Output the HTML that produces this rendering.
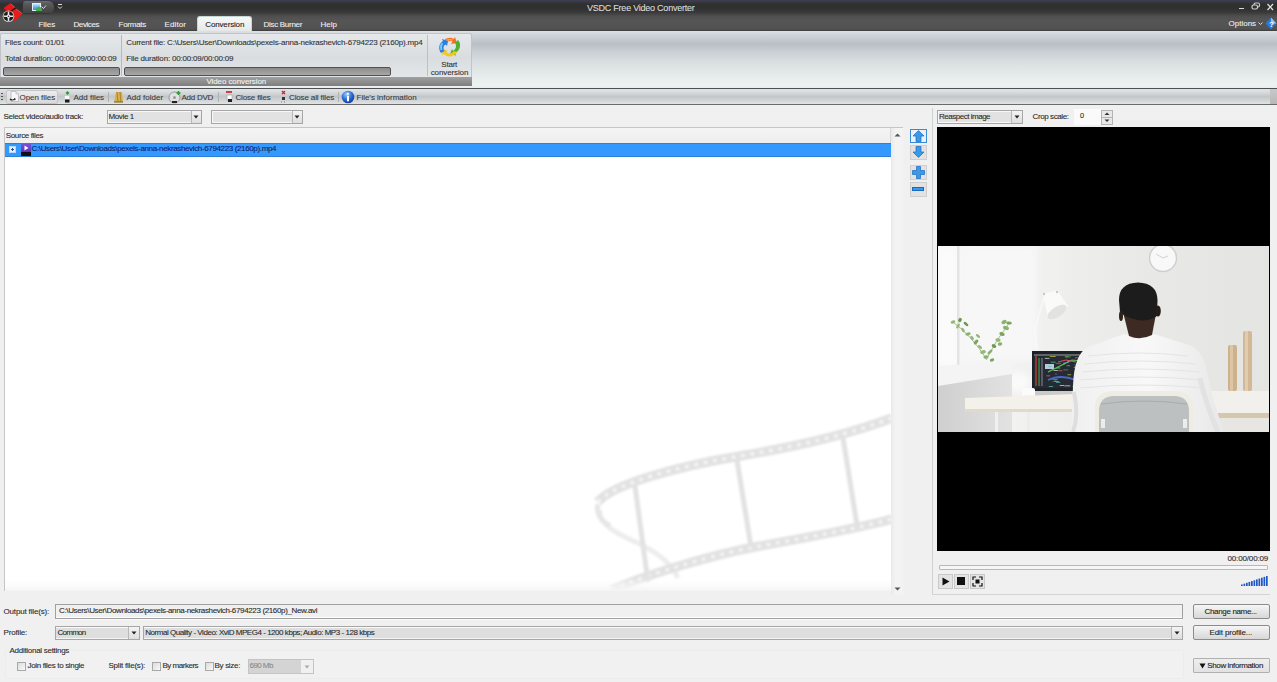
<!DOCTYPE html>
<html><head><meta charset="utf-8">
<style>
*{margin:0;padding:0;box-sizing:border-box}
html,body{width:1277px;height:682px;overflow:hidden;background:#f0f0f0;font-family:"Liberation Sans",sans-serif;font-size:8px;color:#222}
.a{position:absolute}
.t{position:absolute;white-space:nowrap;line-height:10px;-webkit-text-stroke:0.1px currentColor}
</style></head><body>
<!-- title bar -->
<div class="a" style="left:0;top:0;width:1277px;height:31px;background:linear-gradient(#3e3e4e 0px,#383846 2px,#2e302e 4px,#303030 8px,#383838 12px,#4e4e4e 16px,#555555 20px,#525252 29px,#3c3c3c 31px)"></div>
<div class="t" style="left:587.0px;top:2px;color:#dcdcdc;font-size:9px;line-height:12px;letter-spacing:-0.235px">VSDC Free Video Converter</div>
<svg class="a" style="left:0;top:0" width="30" height="28" viewBox="0 0 30 28">
 <path d="M3.5 8 L10.5 3 L15.5 8 L8.5 13 Z" fill="#e41818"/>
 <path d="M15.5 8.5 L22.5 13.5 L15 21.5 L9 13.5 Z" fill="#ea1a1a"/>
 <path d="M8.5 13 L15.5 8" stroke="#2a0606" stroke-width="1.3"/>
 <path d="M11 4 L15 7.5 M16 9 L21.5 13" stroke="#ff9090" stroke-width="0.6" opacity="0.7"/>
 <circle cx="8.5" cy="16.3" r="5.8" fill="#d0d0d0"/>
 <circle cx="8.5" cy="16.3" r="5" fill="#1a1a1a"/>
 <path d="M8.5 11.5 V21 M3.7 16.3 H13.3" stroke="#e8e8e8" stroke-width="1.6"/>
 <circle cx="8.5" cy="16.3" r="1.8" fill="#f0f0f0"/>
 <circle cx="8.5" cy="16.3" r="0.8" fill="#222"/>
</svg>
<div class="a" style="left:23px;top:1px;width:31px;height:13px;border-radius:3px 6px 6px 3px;background:linear-gradient(#6e6e6e,#5a5a5a 20%,#4c4c4c 60%,#444 90%,#2a2a2a)"></div>
<div class="a" style="left:32px;top:3px;width:9px;height:8px;background:linear-gradient(#c8e4ff,#6ab0e8 50%,#3a90c8);border:1px solid #e0f0ff"></div><div class="a" style="left:36px;top:7px;width:6px;height:4px;border-radius:3px 3px 0 0;background:#40b040"></div>
<svg class="a" style="left:41px;top:5px" width="6" height="5"><path d="M0.5 1.5 L2.5 3.5 L5 0.5" stroke="#ddd" stroke-width="1" fill="none"/></svg>
<svg class="a" style="left:57px;top:3px" width="6" height="8"><path d="M1 1.5 H5" stroke="#ddd" stroke-width="1"/><path d="M1 3.5 L3 5.5 L5 3.5" stroke="#ddd" stroke-width="1" fill="none"/></svg>
<!-- window controls -->
<div class="a" style="left:1239px;top:8px;width:5px;height:1.2px;background:#d8d8d8"></div>
<svg class="a" style="left:1251px;top:2px" width="10" height="8" viewBox="0 0 10 8"><rect x="3" y="1" width="5.5" height="4" rx="1.5" fill="none" stroke="#c8c8c8" stroke-width="1.2"/><rect x="1" y="3" width="5.5" height="4" rx="1.5" fill="#333" stroke="#d0d0d0" stroke-width="1.2"/></svg>
<svg class="a" style="left:1266px;top:3px" width="9" height="8"><path d="M1.5 1 L7 7 M7 1 L1.5 7" stroke="#e0e0e0" stroke-width="1.3"/></svg>
<!-- tabs -->
<div class="t" style="left:38.5px;top:20px;color:#eeeeee;font-size:8px;letter-spacing:-0.058px">Files</div>
<div class="t" style="left:73.5px;top:20px;color:#eeeeee;font-size:8px;letter-spacing:-0.408px">Devices</div>
<div class="t" style="left:118.5px;top:20px;color:#eeeeee;font-size:8px;letter-spacing:-0.248px">Formats</div>
<div class="t" style="left:164.5px;top:20px;color:#eeeeee;font-size:8px;letter-spacing:0.117px">Editor</div>
<div class="a" style="left:197px;top:16px;width:55px;height:16px;border-radius:3px 3px 0 0;background:linear-gradient(#f8f9f9,#e4e7e8);border:1px solid #c6d8d6;border-bottom:none"></div>
<div class="t" style="left:205.3px;top:20px;color:#222;font-size:8px;letter-spacing:-0.156px">Conversion</div>
<div class="t" style="left:263.5px;top:20px;color:#eeeeee;font-size:8px;letter-spacing:-0.290px">Disc Burner</div>
<div class="t" style="left:320.5px;top:20px;color:#eeeeee;font-size:8px;letter-spacing:0.037px">Help</div>
<div class="t" style="left:1228.5px;top:19px;color:#eeeeee;font-size:8px;letter-spacing:0.004px">Options</div>
<svg class="a" style="left:1258px;top:22px" width="5" height="3"><path d="M0.5 0.5 L2.5 2.5 L4.5 0.5" stroke="#ddd" fill="none"/></svg>
<svg class="a" style="left:1265px;top:17px" width="12" height="13" viewBox="0 0 12 13"><path d="M6 0.5 L11.5 6.5 L6 12.5 L0.5 6.5 Z" fill="#2a78d8"/><path d="M6 0.5 L11.5 6.5 L6 6.5 Z" fill="#8cc4f4"/><text x="4" y="10" font-size="8" fill="#fff" font-family="Liberation Sans" font-weight="bold">?</text></svg>

<!-- ribbon panel -->
<div class="a" style="left:0;top:31px;width:1277px;height:58px;background:linear-gradient(#dde1e6 0px,#cfd4da 4px,#babfc7 13px,#c9ced4 20px,#d8dde0 30px,#e6ebeb 45px,#eef2f2 54px,#e8ecec 58px)"></div>
<!-- group -->
<div class="a" style="left:0;top:33px;width:472px;height:53px;background:linear-gradient(#e6e8ea,#dadde0 45%,#e8ebec);border:1px solid #c0c4c8;border-radius:2px"></div>
<div class="a" style="left:121px;top:35px;width:1px;height:41px;background:#b8b8b8"></div>
<div class="a" style="left:427px;top:35px;width:1px;height:41px;background:#c0c0c0"></div>
<div class="t" style="left:5.1px;top:38px;color:#333;font-size:8px;letter-spacing:-0.203px">Files count: 01/01</div>
<div class="t" style="left:5.0px;top:54px;color:#333;font-size:8px;letter-spacing:-0.163px">Total duration: 00:00:09/00:00:09</div>
<div class="t" style="left:126.3px;top:38px;color:#333;font-size:8px;letter-spacing:-0.199px">Current file: C:\Users\User\Downloads\pexels-anna-nekrashevich-6794223 (2160p).mp4</div>
<div class="t" style="left:126.3px;top:54px;color:#333;font-size:8px;letter-spacing:-0.187px">File duration: 00:00:09/00:00:09</div>
<div class="a" style="left:3px;top:67px;width:117px;height:9px;background:linear-gradient(#8c8c8c,#a8a8a8);border:1px solid #505050;border-radius:2px"></div>
<div class="a" style="left:124px;top:67px;width:267px;height:9px;background:linear-gradient(#8c8c8c,#a8a8a8);border:1px solid #505050;border-radius:2px"></div>
<div class="a" style="left:0;top:77px;width:472px;height:9px;background:linear-gradient(#a0a0a0,#7e7e7e)"></div>
<div class="t" style="left:206.5px;top:76px;color:#f4f4f4;font-size:8px;line-height:11px;letter-spacing:-0.102px">Video conversion</div>
<!-- start conversion -->
<svg class="a" style="left:438px;top:36px" width="24" height="23" viewBox="0 0 24 23">
 <path d="M4 9 C5 3 11 0 16 3 L17 1 L19 7 L13 8 L14.5 5.5 C11 4 8 6 8 9 Z" fill="#f07020"/>
 <path d="M6 6 C8 3 12 2 15 3.5 L14 5 C11 4 9 5 7.5 7 Z" fill="#ffa050"/>
 <path d="M20 4 C24 8 22 15 17 17 L18 19.5 L12 18 L14 13 L15 15 C18 13 19 10 17 7 Z" fill="#50b030"/>
 <path d="M19 16 C16 21 9 22 6 18 L4 19 L5 13 L10 15 L8 16 C10 18 14 18 16 15 Z" fill="#f4c818"/>
 <path d="M3 17 C0 13 1 7 5 5 L4 3 L10 5 L9 10 L7.5 8 C5 10 5 13 6.5 15 Z" fill="#2a80e0"/>
 <path d="M2.5 14 C1.5 11 2 8 4 6.5 L5 8 C4 9.5 3.5 11.5 4.5 14 Z" fill="#80c4ff"/>
</svg>
<div class="t" style="left:441.3px;top:61px;color:#333;font-size:8px;line-height:8px;letter-spacing:-0.219px">Start</div>
<div class="t" style="left:430.7px;top:69px;color:#333;font-size:8px;line-height:8px;letter-spacing:-0.109px">conversion</div>

<!-- toolbar -->
<div class="a" style="left:0;top:88px;width:1277px;height:17px;background:linear-gradient(#e2e5e7,#d2d6d9 30%,#c2c6c9 50%,#d0d4d6 75%,#e2e4e4);border-top:1px solid #4c5052;border-bottom:1px solid #6a6a6a"></div>
<div class="a" style="left:1px;top:93px;width:2px;height:8px;background:repeating-linear-gradient(#555 0 1px,transparent 1px 3px)"></div>
<div class="a" style="left:6px;top:90px;width:52px;height:14px;border:1px solid #c6c6c6;border-radius:2px;background:linear-gradient(#ececec,#d9d9d9)"></div>
<svg class="a" style="left:8px;top:90px" width="13" height="13" viewBox="0 0 13 13"><path d="M3 1.5 H8 L10.5 4 V11.5 H3 Z" fill="#f6f6f6" stroke="#b0b0b0" stroke-width="0.7"/><path d="M8 1.5 V4 H10.5" fill="#ddd" stroke="#b0b0b0" stroke-width="0.5"/><path d="M2 9 Q4 11 7 9" stroke="#222" stroke-width="1.1" fill="none"/><path d="M6 8 L8 9 L6.5 10.5" fill="#222"/></svg>
<div class="t" style="left:19.5px;top:93px;color:#3a3a3a;font-size:8px;letter-spacing:-0.042px">Open files</div>
<svg class="a" style="left:62px;top:90px" width="10" height="14" viewBox="0 0 10 14"><path d="M5.5 1 L7.5 3 L5.5 5 L3.5 3 Z" fill="#28a028"/><rect x="2.5" y="5.5" width="5" height="4" fill="#fafafa" stroke="#bbb" stroke-width="0.5"/><rect x="3" y="9.5" width="4.5" height="3" fill="#1a1a1a"/></svg>
<div class="t" style="left:73.5px;top:93px;color:#3a3a3a;font-size:8px;letter-spacing:-0.009px">Add files</div>
<div class="a" style="left:108px;top:92px;width:1px;height:10px;background:#b0b0b0"></div>
<svg class="a" style="left:113px;top:90px" width="11" height="14" viewBox="0 0 11 14"><path d="M1 12 L3 2 L9 2 L10 12 Z" fill="#d8b050"/><path d="M4 2 L5 12 M7 2 L8 12" stroke="#a07818" stroke-width="0.8"/><path d="M1 12 H10" stroke="#806010"/></svg>
<div class="t" style="left:126.5px;top:93px;color:#3a3a3a;font-size:8px;letter-spacing:0.013px">Add folder</div>
<svg class="a" style="left:168px;top:90px" width="14" height="14" viewBox="0 0 14 14"><circle cx="6.5" cy="7.5" r="5.5" fill="#e0e0e0" stroke="#888" stroke-width="0.8"/><circle cx="6.5" cy="7.5" r="1.5" fill="#999"/><path d="M10.5 1 V5 M8.5 3 H12.5" stroke="#20a020" stroke-width="1.5"/><rect x="4" y="11" width="5" height="2" fill="#222"/></svg>
<div class="t" style="left:181.5px;top:93px;color:#3a3a3a;font-size:8px;letter-spacing:-0.250px">Add DVD</div>
<div class="a" style="left:218px;top:92px;width:1px;height:10px;background:#b0b0b0"></div>
<svg class="a" style="left:225px;top:90px" width="10" height="14" viewBox="0 0 10 14"><rect x="1" y="1" width="6" height="2" fill="#d04040"/><rect x="2" y="5" width="5" height="5" fill="#fff" stroke="#999" stroke-width="0.6"/><rect x="3" y="9" width="4" height="3" fill="#222"/></svg>
<div class="t" style="left:235.5px;top:93px;color:#3a3a3a;font-size:8px;letter-spacing:-0.164px">Close files</div>
<svg class="a" style="left:279px;top:90px" width="10" height="14" viewBox="0 0 10 14"><path d="M3 1 L6 4 M6 1 L3 4" stroke="#d02020" stroke-width="1.2"/><rect x="3" y="7" width="3" height="3" fill="#333"/><path d="M2 12 h1 M5 12 h1" stroke="#777"/></svg>
<div class="t" style="left:289.0px;top:93px;color:#3a3a3a;font-size:8px;letter-spacing:-0.135px">Close all files</div>
<div class="a" style="left:338px;top:92px;width:1px;height:10px;background:#b0b0b0"></div>
<svg class="a" style="left:341px;top:90px" width="14" height="14" viewBox="0 0 14 14"><defs><radialGradient id="ig" cx="0.4" cy="0.3" r="0.7"><stop offset="0" stop-color="#9cd0ff"/><stop offset="0.6" stop-color="#2a6ad8"/><stop offset="1" stop-color="#1a3aa0"/></radialGradient></defs><circle cx="7" cy="7" r="6.3" fill="url(#ig)"/><circle cx="7" cy="3.8" r="1.1" fill="#fff"/><rect x="6" y="5.8" width="2" height="5.5" fill="#fff"/></svg>
<div class="t" style="left:356.5px;top:93px;color:#3a3a3a;font-size:8px;letter-spacing:-0.006px">File's information</div>
<div class="a" style="left:1270px;top:89px;width:7px;height:15px;background:linear-gradient(#c8c8c8,#b8b8b8)"></div>

<!-- main list -->
<div class="t" style="left:3.5px;top:112px;color:#2a2a2a;font-size:8px;letter-spacing:-0.302px">Select video/audio track:</div>
<div class="a" style="left:107px;top:110px;width:95px;height:14px;background:#e2e2e2;border:1px solid #a6a6a6;box-shadow:inset 0 0 0 1px #f8f8f8"></div>
<div class="a" style="left:191px;top:111px;width:10px;height:12px;background:linear-gradient(#f4f4f4,#dedede);border-left:1px solid #b8b8b8"></div>
<svg class="a" style="left:193px;top:115px" width="6" height="4"><path d="M0.5 0.5 H5.5 L3 3.5 Z" fill="#222"/></svg>
<div class="t" style="left:108.5px;top:112px;color:#2a2a2a;font-size:8px;letter-spacing:-0.373px">Movie 1</div>
<div class="a" style="left:211px;top:110px;width:92px;height:14px;background:#e2e2e2;border:1px solid #a6a6a6;box-shadow:inset 0 0 0 1px #f8f8f8"></div>
<div class="a" style="left:292px;top:111px;width:10px;height:12px;background:linear-gradient(#f4f4f4,#dedede);border-left:1px solid #b8b8b8"></div>
<svg class="a" style="left:294px;top:115px" width="6" height="4"><path d="M0.5 0.5 H5.5 L3 3.5 Z" fill="#222"/></svg>

<div class="a" style="left:4px;top:127px;width:899px;height:464px;background:#fff;border-top:1px solid #c6c6c6;border-left:1px solid #c6c6c6"></div>
<div class="a" style="left:5px;top:128px;width:886px;height:15px;background:linear-gradient(#f4f4f4,#eeeeee);border-right:1px solid #d8d8d8"></div>
<div class="t" style="left:5.8px;top:131px;color:#2a2a2a;font-size:8px;letter-spacing:-0.375px">Source files</div>
<svg class="a" style="left:5px;top:143px" width="886" height="448" viewBox="5 143 886 448">
 <defs><filter id="fb" filterUnits="userSpaceOnUse" x="560" y="380" width="340" height="220"><feGaussianBlur stdDeviation="0.9"/></filter>
 <linearGradient id="fade" x1="0" y1="0" x2="0" y2="1"><stop offset="0" stop-color="#fff" stop-opacity="0"/><stop offset="1" stop-color="#f4f4f4" stop-opacity="1"/></linearGradient></defs>
 <g fill="none" stroke-linecap="butt" filter="url(#fb)">
  <path d="M600 510 C598 522 612 532 640 544 C660 554 672 564 678 578" stroke="#ededed" stroke-width="5"/>
  <path d="M598 502 C612 484 680 466 740 456 C800 446 850 434 892 418" stroke="#e2e2e2" stroke-width="9.5"/>
  <path d="M598 502 C612 484 680 466 740 456 C800 446 850 434 892 418" stroke="#f6f6f6" stroke-width="3.2" stroke-dasharray="3.5 6"/>
  <path d="M612 590 C650 573 720 553 760 546 C810 537 860 528 892 519" stroke="#e2e2e2" stroke-width="9.5"/>
  <path d="M612 590 C650 573 720 553 760 546 C810 537 860 528 892 519" stroke="#f6f6f6" stroke-width="3.2" stroke-dasharray="3.5 6"/>
  <path d="M635 486 L648 582" stroke="#e2e2e2" stroke-width="5"/>
  <path d="M737 460 L751 547" stroke="#e2e2e2" stroke-width="5"/>
  <path d="M843 438 L857 525" stroke="#e2e2e2" stroke-width="5"/>
  <path d="M598 504 C596 514 600 520 610 526" stroke="#e6e6e6" stroke-width="5"/>
 </g>
 <rect x="5" y="578" width="886" height="13" fill="url(#fade)"/>
</svg>
<div class="a" style="left:891px;top:128px;width:15px;height:467px;background:linear-gradient(90deg,#eaeaea,#f3f3f3 30%,#f3f3f3 70%,#efefef)"></div>
<svg class="a" style="left:894px;top:133px" width="7" height="4"><path d="M0.5 3.5 L3.5 0.5 L6.5 3.5 Z" fill="#555"/></svg>
<svg class="a" style="left:894px;top:587px" width="7" height="4"><path d="M0.5 0.5 L3.5 3.5 L6.5 0.5 Z" fill="#555"/></svg>
<div class="a" style="left:5px;top:143px;width:886px;height:14px;background:#3399ff;border-top:1px solid #2f80d8;border-bottom:1px solid #2f80d8"></div>
<div class="a" style="left:9px;top:146px;width:7px;height:7px;background:#e8f2ff;border:1px solid #bcd8f8"></div>
<div class="a" style="left:11px;top:149px;width:3px;height:1px;background:#2050a0"></div>
<div class="a" style="left:12px;top:148px;width:1px;height:3px;background:#2050a0"></div>
<div class="a" style="left:21px;top:144px;width:10px;height:9px;background:linear-gradient(#7a50d8,#5a30b8);border-radius:1px"></div>
<svg class="a" style="left:24px;top:145px" width="5" height="6"><path d="M0.5 0.5 L4.5 3 L0.5 5.5 Z" fill="#fff"/></svg>
<div class="a" style="left:21px;top:152px;width:10px;height:4px;background:#111"></div>
<div class="t" style="left:31.5px;top:144px;color:#12206a;font-size:8px;letter-spacing:-0.359px">C:\Users\User\Downloads\pexels-anna-nekrashevich-6794223 (2160p).mp4</div>

<!-- side buttons -->
<div class="a" style="left:910px;top:129px;width:17px;height:14px;background:#e8f0f8;border:1px solid #3a8ad8"></div>
<svg class="a" style="left:912px;top:130px" width="13" height="12" viewBox="0 0 13 12"><path d="M6.5 0.5 L12 6 L9 6 L9 11.5 L4 11.5 L4 6 L1 6 Z" fill="#3a9ae8" stroke="#1a6ac0" stroke-width="0.7"/></svg>
<div class="a" style="left:910px;top:145px;width:17px;height:15px;background:#e2e2e2;border:1px solid #cfcfcf"></div>
<svg class="a" style="left:912px;top:146px" width="13" height="12" viewBox="0 0 13 12"><path d="M6.5 11.5 L12 6 L9 6 L9 0.5 L4 0.5 L4 6 L1 6 Z" fill="#3a9ae8" stroke="#1a6ac0" stroke-width="0.7"/></svg>
<div class="a" style="left:910px;top:165px;width:17px;height:15px;background:#e2e2e2;border:1px solid #cfcfcf"></div>
<svg class="a" style="left:912px;top:166px" width="13" height="13" viewBox="0 0 13 13"><path d="M4.5 0.5 H8.5 V4.5 H12.5 V8.5 H8.5 V12.5 H4.5 V8.5 H0.5 V4.5 H4.5 Z" fill="#3a9ae8" stroke="#1a6ac0" stroke-width="0.7"/></svg>
<div class="a" style="left:910px;top:182px;width:17px;height:15px;background:#e2e2e2;border:1px solid #cfcfcf"></div>
<div class="a" style="left:912px;top:187px;width:12px;height:4px;background:#3a9ae8;border:0.5px solid #1a6ac0"></div>
<div class="a" style="left:932px;top:108px;width:1px;height:487px;background:#d0d0d0"></div>

<!-- right preview -->
<div class="a" style="left:937px;top:110px;width:86px;height:14px;background:#e2e2e2;border:1px solid #a6a6a6;box-shadow:inset 0 0 0 1px #f8f8f8"></div>
<div class="a" style="left:1011px;top:111px;width:11px;height:12px;background:linear-gradient(#f4f4f4,#dedede);border-left:1px solid #b8b8b8"></div>
<svg class="a" style="left:1014px;top:115px" width="6" height="4"><path d="M0.5 0.5 H5.5 L3 3.5 Z" fill="#222"/></svg>
<div class="t" style="left:938.9px;top:112px;color:#2a2a2a;font-size:8px;letter-spacing:-0.472px">Reaspect image</div>
<div class="t" style="left:1032.5px;top:112px;color:#2a2a2a;font-size:8px;letter-spacing:-0.396px">Crop scale:</div>
<div class="a" style="left:1074px;top:109px;width:27px;height:16px;background:#fafafa"></div>
<div class="t" style="left:1080px;top:111px;color:#2a2a2a;font-size:7.3px">0</div>
<div class="a" style="left:1101px;top:110px;width:12px;height:15px;background:#e8e8e8;border:1px solid #b4b4b4"></div>
<div class="a" style="left:1102px;top:117px;width:10px;height:1px;background:#b4b4b4"></div>
<svg class="a" style="left:1104px;top:112px" width="6" height="4"><path d="M0.5 3 L3 0.5 L5.5 3 Z" fill="#333"/></svg>
<svg class="a" style="left:1104px;top:119px" width="6" height="4"><path d="M0.5 0.5 L3 3 L5.5 0.5 Z" fill="#333"/></svg>

<div class="a" style="left:937px;top:127px;width:333px;height:424px;background:#000"></div>
<svg class="a" style="left:938px;top:246px" width="331" height="186" viewBox="938 246 331 186">
 <defs>
  <filter id="bl" filterUnits="userSpaceOnUse" x="930" y="240" width="350" height="200"><feGaussianBlur stdDeviation="0.7"/></filter>
  <filter id="bl2" filterUnits="userSpaceOnUse" x="930" y="240" width="350" height="200"><feGaussianBlur stdDeviation="3"/></filter>
  <linearGradient id="wall" x1="0" x2="1"><stop offset="0" stop-color="#f6f6f6"/><stop offset="0.35" stop-color="#efefee"/><stop offset="0.6" stop-color="#e9e9e8"/><stop offset="1" stop-color="#e4e4e2"/></linearGradient>
  <linearGradient id="under" x1="0" x2="1"><stop offset="0" stop-color="#cfcfcf"/><stop offset="1" stop-color="#e2e2e2"/></linearGradient>
  <linearGradient id="shirt" x1="0" x2="1"><stop offset="0" stop-color="#f0f0f0"/><stop offset="0.5" stop-color="#f8f8f8"/><stop offset="1" stop-color="#e8e8e8"/></linearGradient>
 </defs>
 <rect x="938" y="246" width="331" height="186" fill="url(#wall)"/>
 <g filter="url(#bl2)">
  <rect x="938" y="246" width="20" height="120" fill="#fbfbfb"/>
  <rect x="962" y="246" width="75" height="115" fill="#f7f7f7"/>
  <rect x="1040" y="246" width="20" height="105" fill="#f0f0ef"/>
  <ellipse cx="1018" cy="382" rx="12" ry="10" fill="#fafafa"/>
 </g>
 <g filter="url(#bl)">
  <rect x="957" y="246" width="2.5" height="120" fill="#e4e4e4"/>
  <path d="M938 366 L1012 362 L1012 374 L938 386 Z" fill="#f4f4f4"/>
  <path d="M938 386 L1012 374 L1012 432 L938 432 Z" fill="url(#under)"/>
  <g stroke="#98b488" stroke-width="0.9" fill="none"><path d="M953 322 Q972 336 987 360"/><path d="M987 358 Q996 340 1010 322"/></g>
  <g><ellipse cx="953" cy="322" rx="2.4" ry="1.6" transform="rotate(-16 953 322)" fill="#94b878"/><ellipse cx="958" cy="326" rx="2.8" ry="1.3" transform="rotate(-58 958 326)" fill="#94b878"/><ellipse cx="963" cy="330" rx="2.5" ry="1.4" transform="rotate(59 963 330)" fill="#94b878"/><ellipse cx="968" cy="334" rx="2.7" ry="1.6" transform="rotate(-12 968 334)" fill="#8ab46c"/><ellipse cx="972" cy="338" rx="2.4" ry="1.4" transform="rotate(51 972 338)" fill="#94b878"/><ellipse cx="976" cy="342" rx="2.9" ry="1.7" transform="rotate(-52 976 342)" fill="#7ea460"/><ellipse cx="980" cy="347" rx="2.5" ry="1.3" transform="rotate(44 980 347)" fill="#94b878"/><ellipse cx="983" cy="352" rx="2.8" ry="1.9" transform="rotate(-13 983 352)" fill="#94b878"/><ellipse cx="986" cy="357" rx="2.6" ry="1.8" transform="rotate(-7 986 357)" fill="#8ab46c"/><ellipse cx="990" cy="352" rx="3.1" ry="1.4" transform="rotate(-44 990 352)" fill="#8ab46c"/><ellipse cx="994" cy="346" rx="2.5" ry="1.7" transform="rotate(33 994 346)" fill="#6e9852"/><ellipse cx="998" cy="340" rx="2.6" ry="1.8" transform="rotate(9 998 340)" fill="#94b878"/><ellipse cx="1002" cy="334" rx="2.8" ry="1.8" transform="rotate(22 1002 334)" fill="#7ea460"/><ellipse cx="1006" cy="328" rx="3.1" ry="1.9" transform="rotate(21 1006 328)" fill="#8ab46c"/><ellipse cx="1009" cy="323" rx="2.9" ry="1.5" transform="rotate(5 1009 323)" fill="#7ea460"/><ellipse cx="966" cy="324" rx="2.9" ry="1.4" transform="rotate(40 966 324)" fill="#6e9852"/><ellipse cx="978" cy="336" rx="2.5" ry="1.3" transform="rotate(42 978 336)" fill="#94b878"/><ellipse cx="1000" cy="344" rx="2.3" ry="1.8" transform="rotate(-11 1000 344)" fill="#8ab46c"/><ellipse cx="992" cy="360" rx="2.2" ry="1.6" transform="rotate(-10 992 360)" fill="#7ea460"/><ellipse cx="960" cy="320" rx="2.2" ry="1.7" transform="rotate(-55 960 320)" fill="#6e9852"/><ellipse cx="1004" cy="322" rx="2.8" ry="1.9" transform="rotate(-27 1004 322)" fill="#8ab46c"/></g>
  <path d="M1044 298 L1035 328 L1037 352" stroke="#f8f8f8" stroke-width="1.8" fill="none"/>
  <path d="M1043 294 L1057 290 L1068 306 L1048 319 Z" fill="#fafafa"/>
  <ellipse cx="1057" cy="312" rx="11" ry="5" transform="rotate(-33 1057 312)" fill="#e2e2e0"/>
  <circle cx="1044" cy="294" r="1.2" fill="#c8c8c8"/><circle cx="1057" cy="292" r="1.2" fill="#c8c8c8"/>
  <rect x="1032" y="351" width="54" height="42" fill="#1e2126"/>
  <rect x="1034" y="354" width="50" height="34" fill="#262b32"/>
  <path d="M1036 356 V386" stroke="#b83838" stroke-width="1.5"/>
  <path d="M1039 358 V386" stroke="#3a9a48" stroke-width="1.2"/>
  <path d="M1042 358 V386" stroke="#9aa8b0" stroke-width="0.8"/>
  <rect x="1045" y="364" width="9" height="5" fill="#c0c4d8"/>
  <rect x="1081.9" y="365.6" width="2.3" height="0.9" fill="#c0c040" opacity="0.8"/>
  <rect x="1064.4" y="385.4" width="5.9" height="0.9" fill="#e0e0e0" opacity="0.8"/>
  <rect x="1067.2" y="360.8" width="2.2" height="0.9" fill="#50c0c0" opacity="0.8"/>
  <rect x="1056.9" y="367.2" width="2.6" height="0.9" fill="#50c0c0" opacity="0.8"/>
  <rect x="1058.4" y="370.3" width="4.1" height="0.9" fill="#e06080" opacity="0.8"/>
  <rect x="1076.9" y="377.1" width="2.4" height="0.9" fill="#50c0c0" opacity="0.8"/>
  <rect x="1063.3" y="369.4" width="4.9" height="0.9" fill="#40b050" opacity="0.8"/>
  <rect x="1079.6" y="369.6" width="3.0" height="0.9" fill="#e0e0e0" opacity="0.8"/>
  <rect x="1064.8" y="356.4" width="3.7" height="0.9" fill="#c0c040" opacity="0.8"/>
  <rect x="1056.0" y="367.7" width="4.4" height="0.9" fill="#40b050" opacity="0.8"/>
  <rect x="1046.3" y="375.4" width="3.9" height="0.9" fill="#e06080" opacity="0.8"/>
  <rect x="1078.9" y="374.9" width="3.1" height="0.9" fill="#5070d0" opacity="0.8"/>
  <rect x="1044.8" y="357.9" width="4.7" height="0.9" fill="#e0e0e0" opacity="0.8"/>
  <rect x="1053.5" y="370.1" width="4.4" height="0.9" fill="#e0e0e0" opacity="0.8"/>
  <rect x="1050.7" y="361.7" width="5.0" height="0.9" fill="#50c0c0" opacity="0.8"/>
  <rect x="1066.6" y="365.3" width="3.5" height="0.9" fill="#50c0c0" opacity="0.8"/>
  <rect x="1074.9" y="386.1" width="4.7" height="0.9" fill="#40b050" opacity="0.8"/>
  <rect x="1055.8" y="362.9" width="5.2" height="0.9" fill="#40b050" opacity="0.8"/>
  <rect x="1056.5" y="377.0" width="4.6" height="0.9" fill="#d04050" opacity="0.8"/>
  <rect x="1047.9" y="366.0" width="3.3" height="0.9" fill="#50c0c0" opacity="0.8"/>
  <rect x="1052.5" y="381.1" width="5.8" height="0.9" fill="#d04050" opacity="0.8"/>
  <rect x="1056.8" y="376.2" width="5.5" height="0.9" fill="#5070d0" opacity="0.8"/>
  <rect x="1054.3" y="380.4" width="2.1" height="0.9" fill="#40b050" opacity="0.8"/>
  <rect x="1056.0" y="381.9" width="4.3" height="0.9" fill="#50c0c0" opacity="0.8"/>
  <rect x="1054.6" y="381.0" width="4.6" height="0.9" fill="#50c0c0" opacity="0.8"/>
  <rect x="1067.5" y="374.3" width="3.7" height="0.9" fill="#c0c040" opacity="0.8"/>
  <rect x="1074.2" y="364.4" width="3.4" height="0.9" fill="#5070d0" opacity="0.8"/>
  <rect x="1055.0" y="373.6" width="2.1" height="0.9" fill="#5070d0" opacity="0.8"/>
  <rect x="1049.9" y="356.1" width="5.8" height="0.9" fill="#c0c040" opacity="0.8"/>
  <rect x="1081.5" y="369.5" width="5.8" height="0.9" fill="#e06080" opacity="0.8"/>
  <rect x="1052.4" y="379.1" width="5.3" height="0.9" fill="#e06080" opacity="0.8"/>
  <rect x="1072.4" y="385.9" width="4.2" height="0.9" fill="#40b050" opacity="0.8"/>
  <rect x="1076.7" y="382.6" width="5.9" height="0.9" fill="#d04050" opacity="0.8"/>
  <rect x="1074.8" y="357.4" width="5.6" height="0.9" fill="#e06080" opacity="0.8"/>
  <rect x="1063.5" y="362.2" width="5.5" height="0.9" fill="#5070d0" opacity="0.8"/>
  <rect x="1065.9" y="356.4" width="5.0" height="0.9" fill="#40b050" opacity="0.8"/>
  <rect x="1063.1" y="363.4" width="2.1" height="0.9" fill="#c0c040" opacity="0.8"/>
  <rect x="1059.7" y="385.1" width="4.4" height="0.9" fill="#e0e0e0" opacity="0.8"/>
  <rect x="1048.8" y="386.1" width="4.2" height="0.9" fill="#50c0c0" opacity="0.8"/>
  <rect x="1073.7" y="366.9" width="2.8" height="0.9" fill="#c0c040" opacity="0.8"/>
  <path d="M1048 372 L1056 368 L1064 364 L1072 360 L1082 361" stroke="#58c858" stroke-width="1.2" fill="none"/>
  <path d="M1058 362 L1066 360 L1076 362" stroke="#e05070" stroke-width="1" fill="none"/>
  <path d="M1048 380 Q1060 374 1076 380" stroke="#4a68c0" stroke-width="1.8" fill="none"/>
  <rect x="1034" y="354" width="50" height="2" fill="#60646a"/>
  <rect x="1030" y="391" width="56" height="6" fill="#cacaca"/>
  <rect x="1022" y="388" width="13" height="10" rx="2" fill="#fbfbfb"/>
  <ellipse cx="1030" cy="398" rx="10" ry="3" fill="#f2f2f2"/>
  <path d="M965 398 L1075 394 L1075 410 L965 410 Z" fill="#f4f0ea"/>
  <rect x="965" y="409" width="110" height="3" fill="#e2d8cc"/>
  <rect x="995" y="412" width="3" height="20" fill="#f0f0f0"/>
  <rect x="1027" y="412" width="3" height="20" fill="#ececec"/>
  <rect x="1190" y="391" width="79" height="22" fill="#f2f0ec"/>
  <rect x="1210" y="413" width="59" height="5" fill="#d6c6ae"/>
  <rect x="1210" y="418" width="59" height="14" fill="#e8e6e2"/>
  <rect x="1228" y="345" width="9" height="46" rx="2" fill="#cdb28c"/>
  <rect x="1230" y="345" width="3" height="46" fill="#dcc6a6"/>
  <rect x="1243" y="331" width="9" height="60" rx="2" fill="#d2b894"/>
  <rect x="1245" y="331" width="3" height="60" fill="#e0ccae"/>
  <circle cx="1163" cy="258" r="13.5" fill="#f8f8f8" stroke="#cfcfcf" stroke-width="1.5"/>
  <path d="M1163 258 L1156 254 M1163 258 L1168 256" stroke="#c8c8c8" stroke-width="0.8"/>
  <path d="M1071 432 L1073 386 Q1074 354 1088 347 L1124 334 Q1140 338 1154 334 L1192 346 Q1204 353 1207 372 L1214 402 L1224 432 Z" fill="url(#shirt)"/>
  <path d="M1088 356 Q1140 350 1188 356 M1084 364 Q1140 358 1196 364 M1082 372 Q1140 366 1200 372 M1080 380 Q1140 374 1202 380 M1080 388 Q1140 382 1204 388" stroke="#e2e2e2" stroke-width="0.9" fill="none"/>
  <path d="M1074 392 Q1079 415 1073 432" stroke="#dedede" stroke-width="4" fill="none"/>
  <path d="M1200 378 Q1206 405 1218 432" stroke="#e2e2e2" stroke-width="5" fill="none"/>
  <path d="M1122 308 L1129 336 Q1140 341 1152 335 L1156 314 Z" fill="#3e2c24"/>
  <path d="M1119 300 Q1119 283 1138 282.5 Q1157 283 1157.5 300 L1157 316 Q1148 322 1138 320 Q1126 318 1120 312 Z" fill="#1c1c1c"/>
  <ellipse cx="1121" cy="316" rx="2" ry="5" fill="#2e221c"/>
  <ellipse cx="1158" cy="311" rx="2.8" ry="5.5" fill="#261c18"/>
  <path d="M1095 432 L1095 406 Q1096 392 1112 391 L1176 391 Q1192 392 1193 406 L1193 432 Z" fill="#efece4"/>
  <path d="M1099 432 L1099 410 Q1100 396 1114 396 L1174 396 Q1188 396 1189 410 L1189 432 Z" fill="#bcc0c0"/>
  <path d="M1101 404 Q1144 398 1187 404" stroke="#a8acac" stroke-width="1" fill="none"/>
  <rect x="1101" y="419" width="4" height="9" fill="#ececec"/>
  <rect x="1183" y="419" width="4" height="9" fill="#ececec"/>
 </g>
</svg>
<div class="t" style="left:1227.5px;top:554px;color:#2a2a2a;font-size:8px;letter-spacing:-0.151px">00:00/00:09</div>
<div class="a" style="left:939px;top:565px;width:329px;height:5px;background:#f6f6f6;border:1px solid #b8b8b8;border-radius:1px"></div>
<div class="a" style="left:938px;top:574px;width:15px;height:15px;background:#e4e4e4;border:1px solid #c8c8c8"></div>
<svg class="a" style="left:942px;top:577px" width="8" height="9"><path d="M0.5 0.5 L7.5 4.5 L0.5 8.5 Z" fill="#111"/></svg>
<div class="a" style="left:954px;top:574px;width:15px;height:15px;background:#e4e4e4;border:1px solid #c8c8c8"></div>
<div class="a" style="left:957px;top:577px;width:8px;height:8px;background:#111"></div>
<div class="a" style="left:970px;top:574px;width:15px;height:15px;background:#e4e4e4;border:1px solid #c8c8c8"></div>
<svg class="a" style="left:972px;top:576px" width="11" height="11" viewBox="0 0 11 11"><path d="M1 4 V1 H4 M7 1 H10 V4 M10 7 V10 H7 M4 10 H1 V7" stroke="#111" stroke-width="1.2" fill="none"/><rect x="3.5" y="3.5" width="4" height="4" fill="#111"/></svg>
<svg class="a" style="left:1240px;top:575px" width="29" height="12" viewBox="0 0 29 12"><g fill="#1e58c8"><rect x="1.0" y="9.50" width="1.7" height="1.50"/><rect x="3.5" y="8.65" width="1.7" height="2.35"/><rect x="6.0" y="7.80" width="1.7" height="3.20"/><rect x="8.5" y="6.95" width="1.7" height="4.05"/><rect x="11.0" y="6.10" width="1.7" height="4.90"/><rect x="13.5" y="5.25" width="1.7" height="5.75"/><rect x="16.0" y="4.40" width="1.7" height="6.60"/><rect x="18.5" y="3.55" width="1.7" height="7.45"/><rect x="21.0" y="2.70" width="1.7" height="8.30"/><rect x="23.5" y="1.85" width="1.7" height="9.15"/><rect x="26.0" y="1.00" width="1.7" height="10.00"/></g></svg>
<div class="a" style="left:933px;top:594px;width:337px;height:1px;background:#d4d4d4"></div>

<!-- bottom -->
<div class="t" style="left:3.5px;top:607px;color:#2a2a2a;font-size:8px;letter-spacing:-0.161px">Output file(s):</div>
<div class="a" style="left:55px;top:604px;width:1128px;height:15px;background:#f0f0f0;border:1px solid #a0a0a0;box-shadow:inset 0 -1px 0 #fff, 0 1px 0 #fafafa"></div>
<div class="t" style="left:59.0px;top:606px;color:#2a2a2a;font-size:8px;letter-spacing:-0.356px">C:\Users\User\Downloads\pexels-anna-nekrashevich-6794223 (2160p)_New.avi</div>
<div class="t" style="left:3.5px;top:628px;color:#2a2a2a;font-size:8px;letter-spacing:-0.162px">Profile:</div>
<div class="a" style="left:55px;top:626px;width:85px;height:14px;background:#dedede;border:1px solid #a6a6a6;box-shadow:inset 0 1px 0 #fafafa, inset 0 -1px 0 #f4f4f4"></div>
<div class="a" style="left:128px;top:627px;width:11px;height:12px;background:linear-gradient(#f4f4f4,#dedede);border-left:1px solid #b8b8b8"></div>
<svg class="a" style="left:131px;top:631px" width="6" height="4"><path d="M0.5 0.5 H5.5 L3 3.5 Z" fill="#222"/></svg>
<div class="t" style="left:57.5px;top:628px;color:#2a2a2a;font-size:8px;letter-spacing:-0.742px">Common</div>
<div class="a" style="left:143px;top:626px;width:1040px;height:14px;background:#dedede;border:1px solid #a6a6a6;box-shadow:inset 0 1px 0 #fafafa, inset 0 -1px 0 #f4f4f4"></div>
<div class="a" style="left:1171px;top:627px;width:11px;height:12px;background:linear-gradient(#f4f4f4,#dedede);border-left:1px solid #b8b8b8"></div>
<svg class="a" style="left:1174px;top:631px" width="6" height="4"><path d="M0.5 0.5 H5.5 L3 3.5 Z" fill="#222"/></svg>
<div class="t" style="left:145.2px;top:628px;color:#2a2a2a;font-size:8px;letter-spacing:-0.461px">Normal Quality - Video: XviD MPEG4 - 1200 kbps; Audio: MP3 - 128 kbps</div>

<div class="a" style="left:5px;top:650px;width:1179px;height:29px;border:1px solid #ececec;border-radius:2px;background:#f1f1f1"></div>
<div class="a" style="left:9px;top:646px;width:62px;height:9px;background:#f0f0f0"></div>
<div class="t" style="left:9.5px;top:646px;color:#2a2a2a;font-size:8px;letter-spacing:-0.281px">Additional settings</div>
<div class="a" style="left:17px;top:662px;width:9px;height:9px;background:linear-gradient(135deg,#dcdcdc,#f8f8f8);border:1px solid #a8a8a8"></div>
<div class="t" style="left:27.5px;top:661px;color:#2a2a2a;font-size:8px;letter-spacing:-0.327px">Join files to single</div>
<div class="t" style="left:108.5px;top:661px;color:#2a2a2a;font-size:8px;letter-spacing:-0.212px">Split file(s):</div>
<div class="a" style="left:152px;top:662px;width:9px;height:9px;background:linear-gradient(135deg,#dcdcdc,#f8f8f8);border:1px solid #a8a8a8"></div>
<div class="t" style="left:162.5px;top:661px;color:#2a2a2a;font-size:8px;letter-spacing:-0.485px">By markers</div>
<div class="a" style="left:205px;top:662px;width:9px;height:9px;background:linear-gradient(135deg,#dcdcdc,#f8f8f8);border:1px solid #a8a8a8"></div>
<div class="t" style="left:214.5px;top:661px;color:#2a2a2a;font-size:8px;letter-spacing:-0.301px">By size:</div>
<div class="a" style="left:248px;top:659px;width:66px;height:15px;background:#f0f0f0;border:1px solid #c4c4c4"></div>
<div class="a" style="left:249px;top:660px;width:52px;height:13px;background:#d4d4d4"></div>
<div class="t" style="left:249.5px;top:661px;color:#8a8a8a;font-size:8px;letter-spacing:-0.564px">690 Mb</div>
<svg class="a" style="left:304px;top:665px" width="6" height="4"><path d="M0.5 0.5 H5.5 L3 3.5 Z" fill="#aaa"/></svg>

<div class="a" style="left:1193px;top:604px;width:77px;height:15px;background:linear-gradient(#f6f6f6,#e6e6e6 50%,#d8d8d8);border:1px solid #8c8c8c;border-radius:2px"></div>
<div class="t" style="left:1204.5px;top:607px;color:#1a1a1a;font-size:8px;letter-spacing:-0.338px">Change name...</div>
<div class="a" style="left:1193px;top:625px;width:77px;height:15px;background:linear-gradient(#f6f6f6,#e6e6e6 50%,#d8d8d8);border:1px solid #8c8c8c;border-radius:2px"></div>
<div class="t" style="left:1209.5px;top:628px;color:#1a1a1a;font-size:8px;letter-spacing:-0.124px">Edit profile...</div>
<div class="a" style="left:1193px;top:658px;width:77px;height:15px;background:linear-gradient(#eeeeee,#e2e2e2);border:1px solid #b0b0b0;border-radius:1px"></div>
<svg class="a" style="left:1199px;top:663px" width="7" height="6"><path d="M0.5 0.5 H6.5 L3.5 5.5 Z" fill="#111"/></svg>
<div class="t" style="left:1207.3px;top:661px;color:#1a1a1a;font-size:8px;letter-spacing:-0.382px">Show information</div>
</body></html>
